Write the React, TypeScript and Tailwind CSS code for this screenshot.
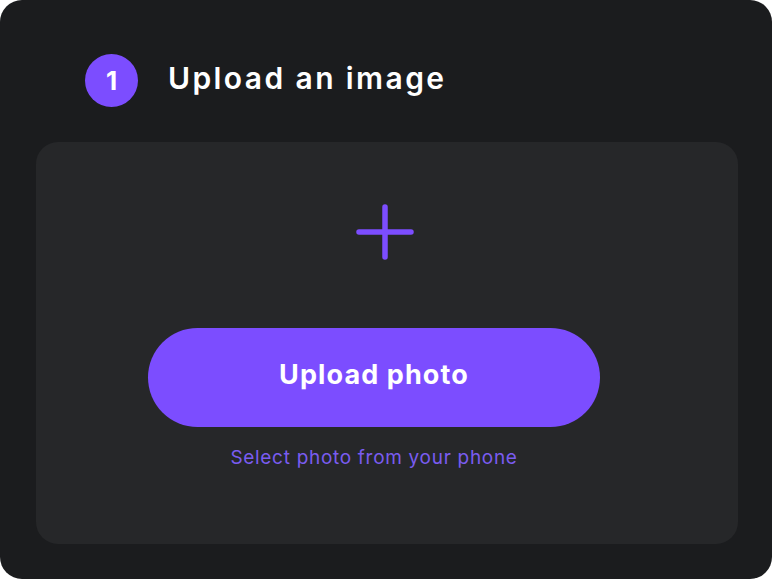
export default function App() {
  return (
    <div className="w-[772px] h-[579px] bg-white">
      <div className="flex h-full w-full flex-col rounded-[22px] bg-[#1b1c1e] pl-[36px] pr-[34px] pb-[35px] font-['Inter',sans-serif]">
        <div className="flex items-center gap-[30px] pl-[49px] pt-[54px]">
          <div className="flex h-[53px] w-[53px] items-center justify-center rounded-full bg-[#7c4dff] text-[26px] font-bold text-white">
            1
          </div>
          <h1 className="-mt-[4px] text-[30px] font-semibold tracking-[2.4px] text-white">Upload an image</h1>
        </div>

        <div className="mt-[35px] flex flex-1 flex-col items-center rounded-[22px] bg-[#262729] pr-[26px]">
          <svg className="mt-[62px] ml-[22px]" width="58" height="56" viewBox="0 0 58 56" fill="none">
            <path d="M29 3v50M3 28h52" stroke="#7c4dff" strokeWidth="5.5" strokeLinecap="round" />
          </svg>
          <button
            type="button"
            className="mt-[68px] h-[99px] w-[452px] rounded-full bg-[#7c4dff] pb-[4px] text-[27px] font-bold tracking-[1.1px] text-white"
          >
            Upload photo
          </button>
          <p className="mt-[19px] text-[19px] leading-[24px] tracking-[0.7px] text-[#7a5cf0]">Select photo from your phone</p>
        </div>
      </div>
    </div>
  );
}
